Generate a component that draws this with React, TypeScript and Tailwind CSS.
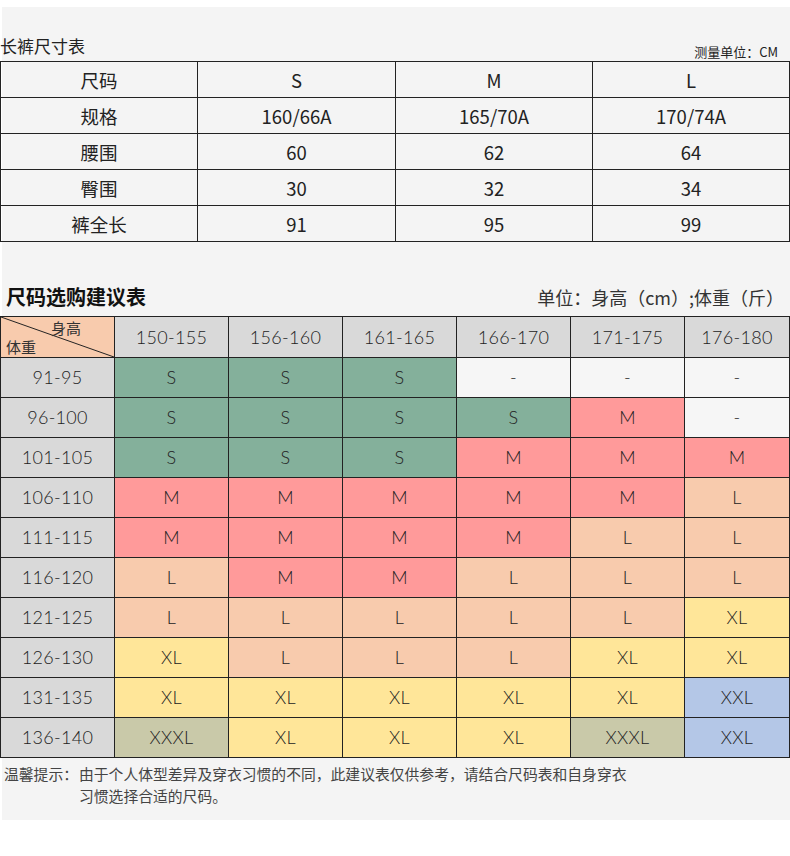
import React from "react";

const cjk = { fontFamily: '"Noto Sans CJK SC", "Noto Sans", sans-serif' };
const num = { fontFamily: 'Lato, "Noto Sans CJK SC", sans-serif' };

const heights = ["150-155", "156-160", "161-165", "166-170", "171-175", "176-180"];
const rows: [string, string[]][] = [
  ["91-95", ["S", "S", "S", "-", "-", "-"]],
  ["96-100", ["S", "S", "S", "S", "M", "-"]],
  ["101-105", ["S", "S", "S", "M", "M", "M"]],
  ["106-110", ["M", "M", "M", "M", "M", "L"]],
  ["111-115", ["M", "M", "M", "M", "L", "L"]],
  ["116-120", ["L", "M", "M", "L", "L", "L"]],
  ["121-125", ["L", "L", "L", "L", "L", "XL"]],
  ["126-130", ["XL", "L", "L", "L", "XL", "XL"]],
  ["131-135", ["XL", "XL", "XL", "XL", "XL", "XXL"]],
  ["136-140", ["XXXL", "XL", "XL", "XL", "XXXL", "XXL"]],
];

const bg: Record<string, string> = {
  S: "bg-[#84b09b]",
  M: "bg-[#ff9a9a]",
  L: "bg-[#f8cbad]",
  XL: "bg-[#ffe699]",
  XXL: "bg-[#b4c7e7]",
  XXXL: "bg-[#c9c9a9]",
  "-": "bg-[#f6f6f6]",
};

const top: string[][] = [
  ["尺码", "S", "M", "L"],
  ["规格", "160/66A", "165/70A", "170/74A"],
  ["腰围", "60", "62", "64"],
  ["臀围", "30", "32", "34"],
  ["裤全长", "91", "95", "99"],
];

export default function App() {
  return (
    <div className="w-[790px] h-[856px] bg-white overflow-hidden">
      <div className="mt-[7px] ml-[2px] w-[788px] h-[813px] bg-[#f4f4f4]">
        <div className="-ml-[2px] w-[790px]">
          {/* title row 1 */}
          <div className="h-[54px] flex items-end justify-between" style={cjk}>
            <div className="text-[17px] leading-[20px] text-[#222] pb-[5px]">长裤尺寸表</div>
            <div className="text-[13px] leading-[16px] text-[#222] pr-[12px] pb-[1px]">测量单位：CM</div>
          </div>
          {/* table 1 */}
          <table className="border-collapse w-[789px] table-fixed" style={cjk}>
            <colgroup>
              <col className="w-[197px]" />
              <col className="w-[198px]" />
              <col className="w-[197px]" />
              <col className="w-[197px]" />
            </colgroup>
            <tbody>
              {top.map((r, i) => (
                <tr key={i} className="h-[36px]">
                  {r.map((c, j) => (
                    <td key={j} className="border border-[#222] text-center text-[18.5px] text-[#222] p-0 leading-[20px]">
                      {c}
                    </td>
                  ))}
                </tr>
              ))}
            </tbody>
          </table>
          {/* title row 2 */}
          <div className="h-[74px] flex items-end justify-between pb-[6px]" style={cjk}>
            <div className="text-[20px] leading-[26px] font-bold text-[#111] pl-[6px]">尺码选购建议表</div>
            <div className="text-[18px] leading-[26px] text-[#333] pr-[6px]">单位：身高（cm）;体重（斤）</div>
          </div>
          {/* table 2 */}
          <table className="border-collapse w-[789px] table-fixed" style={num}>
            <colgroup>
              <col className="w-[114px]" />
              <col className="w-[114px]" />
              <col className="w-[114px]" />
              <col className="w-[114px]" />
              <col className="w-[114px]" />
              <col className="w-[114px]" />
              <col className="w-[105px]" />
            </colgroup>
            <tbody>
              <tr className="h-[40px]">
                <td className="border border-[#222] bg-[#f8cbad] p-0 relative">
                  <svg className="absolute inset-0 w-full h-full" viewBox="0 0 114 40" preserveAspectRatio="none">
                    <line x1="0" y1="0" x2="114" y2="40" stroke="#222" strokeWidth="1" />
                  </svg>
                  <div className="relative h-[40px] text-[15px] leading-[17px] text-[#333]" style={cjk}>
                    <div className="absolute left-[50px] top-[2px]">身高</div>
                    <div className="absolute left-[5px] top-[21px]">体重</div>
                  </div>
                </td>
                {heights.map((h) => (
                  <td key={h} className="border border-[#222] bg-[#d9d9d9] text-center text-[18px] font-light text-[#222] tracking-[0.3px] p-0">
                    {h}
                  </td>
                ))}
              </tr>
              {rows.map(([w, cells]) => (
                <tr key={w} className="h-[40px]">
                  <td className="border border-[#222] bg-[#d9d9d9] text-center text-[18px] font-light text-[#222] tracking-[0.3px] p-0">
                    {w}
                  </td>
                  {cells.map((c, j) => (
                    <td key={j} className={`border border-[#222] ${bg[c]} text-center text-[18px] font-light text-[#222] tracking-[0.3px] p-0`}>
                      {c}
                    </td>
                  ))}
                </tr>
              ))}
            </tbody>
          </table>
          {/* note */}
          <div className="flex pt-[5px] text-[14.8px] leading-[22px] text-[#444]" style={cjk}>
            <div className="pl-[4px] w-[79px] shrink-0">温馨提示：</div>
            <div className="whitespace-nowrap">
              由于个人体型差异及穿衣习惯的不同，此建议表仅供参考，请结合尺码表和自身穿衣
              <br />
              习惯选择合适的尺码。
            </div>
          </div>
        </div>
      </div>
    </div>
  );
}
